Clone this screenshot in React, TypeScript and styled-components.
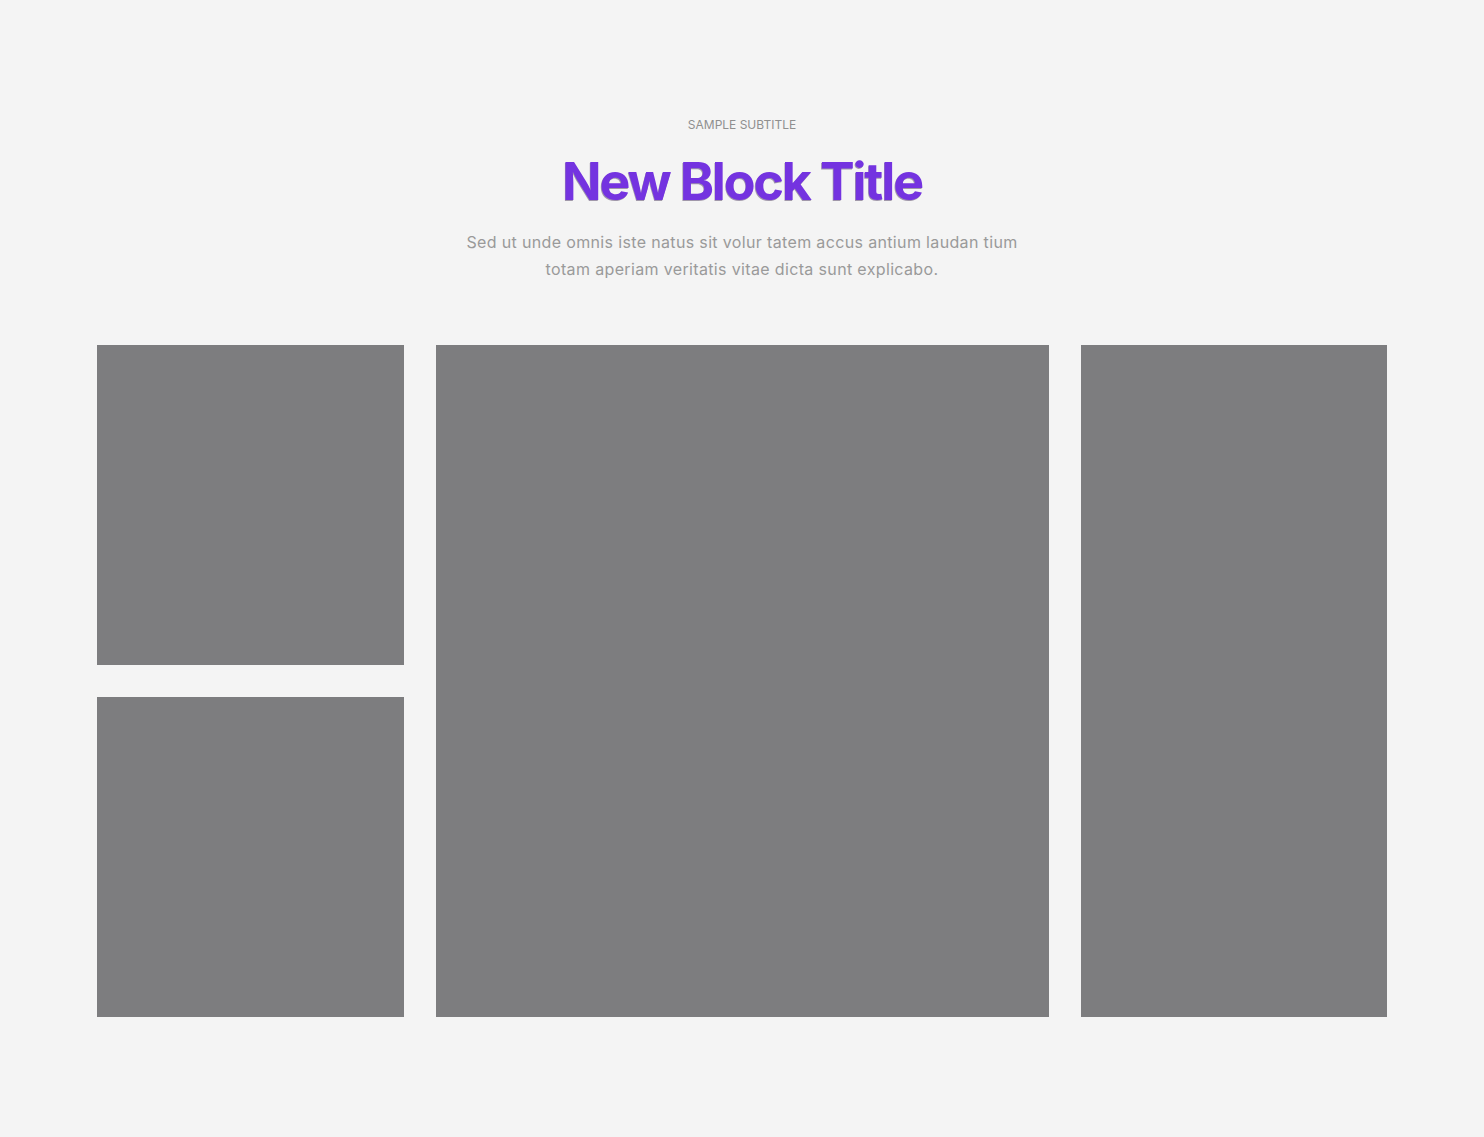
import React from "react";
import styled, { createGlobalStyle } from "styled-components";

const GlobalStyle = createGlobalStyle`
  html, body { margin: 0; padding: 0; background: #f4f4f4; }
  body { font-family: Inter, "Noto Sans", sans-serif; }
`;

const Section = styled.section`
  min-height: 1137px;
  box-sizing: border-box;
  padding: 117px 97px 0;
  display: flex;
  flex-direction: column;
  align-items: center;
`;

const Subtitle = styled.div`
  font-size: 12px;
  line-height: 16px;
  color: #8f8f8f;
  text-transform: uppercase;
  letter-spacing: 0;
`;

const Title = styled.h1`
  margin: 19px 0 0;
  font-size: 52px;
  line-height: 60px;
  font-weight: 700;
  letter-spacing: -2.2px;
  color: #7433e0;
  text-shadow: -0.6px 0.6px 0 rgba(60, 40, 80, 0.45);
`;

const Lead = styled.p`
  margin: 17px 0 0;
  width: 570px;
  text-align: center;
  font-size: 16px;
  line-height: 27px;
  color: #9a9a9a;
  letter-spacing: 0.35px;
`;

const Grid = styled.div`
  margin-top: 62px;
  width: 1290px;
  display: grid;
  grid-template-columns: 1fr 2fr 1fr;
  height: 672px;
  gap: 32px;
`;

const Column = styled.div`
  display: flex;
  flex-direction: column;
  gap: 32px;
`;

const Tile = styled.div`
  background: #7d7d7f;
  flex: 1;
`;

export default function App() {
  return (
    <>
      <GlobalStyle />
      <Section>
        <Subtitle>Sample Subtitle</Subtitle>
        <Title>New Block Title</Title>
        <Lead>
          Sed ut unde omnis iste natus sit volur tatem accus antium laudan tium
          totam aperiam veritatis vitae dicta sunt explicabo.
        </Lead>
        <Grid>
          <Column>
            <Tile />
            <Tile />
          </Column>
          <Tile />
          <Tile />
        </Grid>
      </Section>
    </>
  );
}
